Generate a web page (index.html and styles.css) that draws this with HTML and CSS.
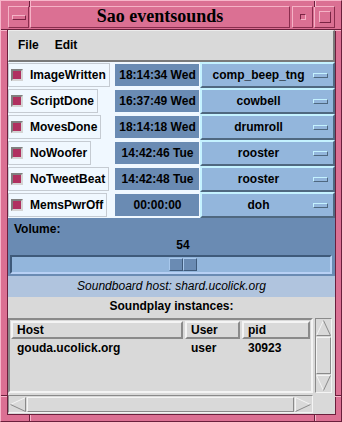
FILE: index.html
```html
<!DOCTYPE html>
<html lang="en">
<head>
    <meta charset="UTF-8">
    <title>Sao eventsounds</title>
    <link rel="stylesheet" href="styles.css">
</head>
<body>
    <div class="frame">
        <!-- resize handle marks on the window border -->
        <span class="notch notch-v" style="left: 28px; top: 0;"></span>
        <span class="notch notch-v" style="left: 313px; top: 0;"></span>
        <span class="notch notch-v" style="left: 28px; bottom: 0;"></span>
        <span class="notch notch-v" style="left: 313px; bottom: 0;"></span>
        <span class="notch notch-h" style="top: 28px; left: 0;"></span>
        <span class="notch notch-h" style="top: 28px; right: 0;"></span>
        <span class="notch notch-h" style="top: 394px; left: 0;"></span>
        <span class="notch notch-h" style="top: 394px; right: 0;"></span>

        <div class="titlebar">
            <div class="tbtn"><span class="tb-bar"></span></div>
            <div class="title">Sao eventsounds</div>
            <div class="tbtn"><span class="tb-small"></span></div>
            <div class="tbtn"><span class="tb-big"></span></div>
        </div>

        <div class="client">
            <div class="menubar">
                <span class="menu-item">File</span>
                <span class="menu-item">Edit</span>
            </div>

            <div class="events">
                <div class="event-row">
                    <div class="label-col"><div class="label-box"><span class="check"></span>ImageWritten</div></div>
                    <div class="time">18:14:34 Wed</div>
                    <div class="menubutton"><span class="mb-text">comp_beep_tng</span><span class="mb-ind"></span></div>
                </div>
                <div class="event-row">
                    <div class="label-col"><div class="label-box"><span class="check"></span>ScriptDone</div></div>
                    <div class="time">16:37:49 Wed</div>
                    <div class="menubutton"><span class="mb-text">cowbell</span><span class="mb-ind"></span></div>
                </div>
                <div class="event-row">
                    <div class="label-col"><div class="label-box"><span class="check"></span>MovesDone</div></div>
                    <div class="time">18:14:18 Wed</div>
                    <div class="menubutton"><span class="mb-text">drumroll</span><span class="mb-ind"></span></div>
                </div>
                <div class="event-row">
                    <div class="label-col"><div class="label-box"><span class="check"></span>NoWoofer</div></div>
                    <div class="time">14:42:46 Tue</div>
                    <div class="menubutton"><span class="mb-text">rooster</span><span class="mb-ind"></span></div>
                </div>
                <div class="event-row">
                    <div class="label-col"><div class="label-box"><span class="check"></span>NoTweetBeat</div></div>
                    <div class="time">14:42:48 Tue</div>
                    <div class="menubutton"><span class="mb-text">rooster</span><span class="mb-ind"></span></div>
                </div>
                <div class="event-row">
                    <div class="label-col"><div class="label-box"><span class="check"></span>MemsPwrOff</div></div>
                    <div class="time">00:00:00</div>
                    <div class="menubutton"><span class="mb-text">doh</span><span class="mb-ind"></span></div>
                </div>
            </div>

            <div class="volume">
                <div class="volume-label">Volume:</div>
                <div class="scale-value" style="margin-left: 159px;">54</div>
                <div class="trough">
                    <div class="slider" style="margin-left: 157px;"><span></span><span></span></div>
                </div>
            </div>

            <div class="host">Soundboard host: shard.ucolick.org</div>

            <div class="instances">
                <div class="instances-title">Soundplay instances:</div>
                <div class="list-area">
                    <div class="listbox">
                        <div class="list-head">
                            <div class="hcell col-host">Host</div>
                            <div class="hcell col-user">User</div>
                            <div class="hcell col-pid">pid</div>
                        </div>
                        <div class="list-row">
                            <div class="col-host">gouda.ucolick.org</div>
                            <div class="col-user">user</div>
                            <div class="col-pid">30923</div>
                        </div>
                    </div>
                    <div class="vscroll">
                        <svg class="arrow" width="15" height="16" viewBox="0 0 15 16">
                            <polygon points="7.5,0.5 14.5,15.5 0.5,15.5" fill="#d9d9d9"/>
                            <line x1="7.5" y1="0.5" x2="0.5" y2="15.5" stroke="#f4f4f4"/>
                            <line x1="7.5" y1="0.5" x2="14.5" y2="15.5" stroke="#8a8a8a"/>
                            <line x1="0.5" y1="15.5" x2="14.5" y2="15.5" stroke="#8a8a8a"/>
                        </svg>
                        <div class="vthumb"></div>
                        <svg class="arrow" width="15" height="16" viewBox="0 0 15 16">
                            <polygon points="0.5,0.5 14.5,0.5 7.5,15.5" fill="#d9d9d9"/>
                            <line x1="0.5" y1="0.5" x2="14.5" y2="0.5" stroke="#f4f4f4"/>
                            <line x1="0.5" y1="0.5" x2="7.5" y2="15.5" stroke="#f4f4f4"/>
                            <line x1="14.5" y1="0.5" x2="7.5" y2="15.5" stroke="#8a8a8a"/>
                        </svg>
                    </div>
                </div>
                <div class="hscroll-row">
                    <div class="hscroll">
                        <svg class="arrow" width="16" height="15" viewBox="0 0 16 15">
                            <polygon points="0.5,7.5 15.5,0.5 15.5,14.5" fill="#d9d9d9"/>
                            <line x1="0.5" y1="7.5" x2="15.5" y2="0.5" stroke="#f4f4f4"/>
                            <line x1="0.5" y1="7.5" x2="15.5" y2="14.5" stroke="#8a8a8a"/>
                            <line x1="15.5" y1="0.5" x2="15.5" y2="14.5" stroke="#8a8a8a"/>
                        </svg>
                        <div class="hthumb"></div>
                        <svg class="arrow" width="16" height="15" viewBox="0 0 16 15">
                            <polygon points="0.5,0.5 15.5,7.5 0.5,14.5" fill="#d9d9d9"/>
                            <line x1="0.5" y1="0.5" x2="15.5" y2="7.5" stroke="#f4f4f4"/>
                            <line x1="0.5" y1="0.5" x2="0.5" y2="14.5" stroke="#f4f4f4"/>
                            <line x1="0.5" y1="14.5" x2="15.5" y2="7.5" stroke="#8a8a8a"/>
                        </svg>
                    </div>
                </div>
            </div>
        </div>
    </div>
</body>
</html>
```
FILE: styles.css
```css
* {
    box-sizing: border-box;
}
body {
    margin: 0;
    font-family: "Liberation Sans", Arial, sans-serif;
    font-size: 12px;
    font-weight: bold;
    color: #000;
}
.frame {
    position: relative;
    width: 342px;
    height: 422px;
    background-color: #db7093;
    border: 1px solid;
    border-color: #f7b6ca #6b1f3c #6b1f3c #f7b6ca;
    padding: 5px 6px 7px 7px;
    display: flex;
    flex-direction: column;
    gap: 2px;
}
.notch {
    position: absolute;
}
.notch-v {
    width: 2px;
    height: 6px;
    border-left: 1px solid #6b1f3c;
    border-right: 1px solid #f7b6ca;
}
.notch-h {
    width: 6px;
    height: 2px;
    border-top: 1px solid #6b1f3c;
    border-bottom: 1px solid #f7b6ca;
}

/* title bar */
.titlebar {
    height: 22px;
    display: flex;
    gap: 1px;
}
.tbtn, .title {
    border: 1px solid;
    border-color: #f5b2c6 #8a2e4e #8a2e4e #f5b2c6;
    display: flex;
    align-items: center;
    justify-content: center;
}
.tbtn {
    width: 21px;
}
.title {
    flex: 1;
    margin-right: 1px;
    font-family: "Liberation Serif", "Times New Roman", serif;
    font-size: 18px;
    font-weight: bold;
    padding-bottom: 1px;
}
.tb-bar {
    width: 14px;
    height: 5px;
    border: 1px solid;
    border-color: #f5b2c6 #7a2444 #7a2444 #f5b2c6;
}
.tb-small {
    width: 6px;
    height: 6px;
    border: 1px solid;
    border-color: #7a2444 #f5b2c6 #f5b2c6 #7a2444;
}
.tb-big {
    width: 12px;
    height: 12px;
    border: 1px solid;
    border-color: #f5b2c6 #7a2444 #7a2444 #f5b2c6;
}

/* client area */
.client {
    width: 327px;
    height: 384px;
    outline: 1px solid #6b1f3c;
    display: flex;
    flex-direction: column;
}
.menubar {
    height: 32px;
    flex: none;
    background-color: #d9d9d9;
    border: 1px solid;
    border-width: 1px 2px 2px 1px;
    border-color: #ececec #7a7a7a #7a7a7a #ececec;
    display: flex;
    align-items: center;
    padding: 0 0 2px 9px;
    gap: 16px;
}

.events {
    background-color: #f0f8ff;
    flex: none;
}
.event-row {
    height: 26px;
    display: flex;
    align-items: center;
}
.label-col {
    width: 107px;
    height: 26px;
    display: flex;
    align-items: center;
}
.label-box {
    height: 24px;
    border: 1px solid #c5cbd2;
    padding: 0 3px 0 2px;
    display: flex;
    align-items: center;
    gap: 7px;
}
.check {
    width: 12px;
    height: 12px;
    border: 2px solid;
    border-color: #808080 #d4d4d4 #d4d4d4 #808080;
    background-color: #b03060;
}
.time {
    width: 84px;
    height: 22px;
    background-color: #6a8bb3;
    display: flex;
    align-items: center;
    justify-content: center;
    padding-left: 1px;
}
.menubutton {
    width: 135px;
    height: 26px;
    margin-left: 1px;
    background-color: #93b6dc;
    border: 2px solid;
    border-color: #c4f2ff #4f6880 #4f6880 #c4f2ff;
    display: flex;
    align-items: center;
    padding-right: 5px;
}
.mb-text {
    flex: 1;
    text-align: center;
    padding-left: 2px;
}
.mb-ind {
    width: 15px;
    height: 5px;
    border: 1px solid;
    border-color: #c4f2ff #4f6880 #4f6880 #c4f2ff;
}

/* volume scale */
.volume {
    height: 58px;
    flex: none;
    background-color: #6a8bb3;
    padding: 4px 3px 2px 2px;
}
.volume-label {
    height: 14px;
    line-height: 14px;
    padding-left: 4px;
}
.scale-value {
    width: 28px;
    height: 14px;
    line-height: 14px;
    margin-top: 2px;
    text-align: center;
}
.trough {
    height: 19px;
    margin-top: 3px;
    background-color: #93b6dc;
    border: 2px solid;
    border-color: #3f5a7a #b8d0f4 #b8d0f4 #3f5a7a;
    display: flex;
    align-items: center;
}
.slider {
    display: flex;
    height: 13px;
}
.slider span {
    width: 14px;
    background-color: #6a8bb3;
    border: 1px solid;
    border-color: #a8c8ec #3f5a7a #3f5a7a #a8c8ec;
}

.host {
    height: 21px;
    flex: none;
    background-color: #b0c4de;
    font-style: italic;
    font-weight: normal;
    text-align: center;
    line-height: 21px;
}

/* soundplay instances */
.instances {
    flex: 1;
    background-color: #d9d9d9;
    padding-top: 2px;
}
.instances-title {
    height: 14px;
    line-height: 14px;
    text-align: center;
}
.list-area {
    display: flex;
    gap: 2px;
    margin-top: 5px;
    height: 75px;
}
.listbox {
    width: 305px;
    border: 2px solid;
    border-color: #8a8a8a #f4f4f4 #f4f4f4 #8a8a8a;
    padding: 1px 0 0 1px;
}
.list-head {
    display: flex;
    gap: 2px;
    height: 18px;
}
.hcell {
    border: 2px solid;
    border-color: #f4f4f4 #8a8a8a #8a8a8a #f4f4f4;
    line-height: 14px;
    padding-left: 4px;
}
.list-head .col-host {
    width: 172px;
}
.list-head .col-user {
    width: 55px;
}
.list-head .col-pid {
    width: 68px;
}
.list-row {
    display: flex;
    height: 14px;
    line-height: 14px;
    margin-top: 2px;
}
.list-row .col-host {
    width: 174px;
    padding-left: 6px;
}
.list-row .col-user {
    width: 57px;
    padding-left: 6px;
}
.list-row .col-pid {
    padding-left: 6px;
}
.vscroll {
    width: 17px;
    border: 1px solid;
    border-color: #8a8a8a #f4f4f4 #f4f4f4 #8a8a8a;
    display: flex;
    flex-direction: column;
    align-items: center;
    padding: 1px 0;
}
.vthumb {
    flex: 1;
    width: 15px;
    border: 1px solid;
    border-color: #f4f4f4 #8a8a8a #8a8a8a #f4f4f4;
    margin: 1px 0;
}
.arrow {
    display: block;
    flex: none;
}
.hscroll-row {
    margin-top: 2px;
    display: flex;
}
.hscroll {
    width: 305px;
    height: 18px;
    border: 1px solid;
    border-color: #8a8a8a #f4f4f4 #f4f4f4 #8a8a8a;
    display: flex;
    align-items: center;
    padding: 0 1px;
}
.hthumb {
    flex: 1;
    height: 15px;
    border: 1px solid;
    border-color: #f4f4f4 #8a8a8a #8a8a8a #f4f4f4;
    margin: 0 1px;
}
```
